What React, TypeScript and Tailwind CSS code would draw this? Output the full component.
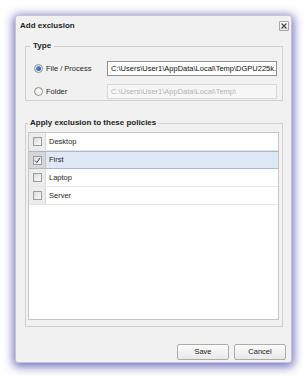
const policies = [
  { name: "Desktop", checked: false },
  { name: "First", checked: true },
  { name: "Laptop", checked: false },
  { name: "Server", checked: false },
]

function Radio({ on }: { on: boolean }) {
  return (
    <span className="w-[9px] h-[9px] rounded-full border border-[#8e8f8f] bg-gradient-to-br from-[#e6e6e6] to-white flex items-center justify-center shrink-0">
      {on && <span className="w-[5px] h-[5px] rounded-full bg-gradient-to-br from-[#6aa0e8] to-[#1b4fa8]" />}
    </span>
  )
}

function Check({ on }: { on: boolean }) {
  return (
    <span className="w-[9px] h-[9px] border border-[#9c9c9c] bg-gradient-to-br from-[#dcdcdc] to-[#fbfbfb] flex items-center justify-center">
      {on && (
        <svg width="7" height="7" viewBox="0 0 7 7">
          <path d="M1 3.6 L2.8 5.6 L6 1" fill="none" stroke="#2b3f8c" strokeWidth="1" />
        </svg>
      )}
    </span>
  )
}

export default function App() {
  return (
    <div className="w-[306px] h-[376px] bg-white pt-[15px] pl-[15px] font-['Liberation_Sans',Arial,sans-serif] text-[#1e1e1e]">
      <div className="w-[277px] h-[348px] bg-[#f1f1f1] rounded-[3px] border border-[#c4c4d6] shadow-[0_2px_10px_2px_rgba(60,60,165,0.7)] flex flex-col">
        {/* title */}
        <div className="h-[19px] flex items-center justify-between pl-[4px] pr-[2px]">
          <span className="text-[8px] font-bold leading-none">Add exclusion</span>
          <span className="w-[10px] h-[10px] border border-[#a5a5a5] rounded-[1px] bg-gradient-to-b from-white to-[#e6e6e6] flex items-center justify-center">
            <svg width="6" height="6" viewBox="0 0 6 6">
              <path d="M0.5 0.5 L5.5 5.5 M5.5 0.5 L0.5 5.5" stroke="#404040" strokeWidth="1.1" />
            </svg>
          </span>
        </div>

        {/* type group */}
        <fieldset className="mt-[6px] ml-[9px] w-[258px] border border-[#d0d0d0]">
          <legend className="ml-[4px] px-[3px] text-[8px] font-bold leading-[10px]">Type</legend>
          <div className="pl-[8px] pr-[5px] pb-[1px]">
            <div className="mt-[10px] flex items-center h-[15px]">
              <div className="w-[73px] flex items-center gap-[3px]">
                <Radio on={true} />
                <span className="text-[7.5px]">File / Process</span>
              </div>
              <div className="flex-1 h-[15px] border border-[#8f8f8f] bg-white pl-[3px] flex items-center overflow-hidden whitespace-nowrap text-[7.5px] text-[#111]">
                C:\Users\User1\AppData\Local\Temp\DGPU225k.
              </div>
            </div>
            <div className="mt-[8px] flex items-center h-[15px]">
              <div className="w-[73px] flex items-center gap-[3px]">
                <Radio on={false} />
                <span className="text-[7.5px]">Folder</span>
              </div>
              <div className="flex-1 h-[15px] border border-[#d9d9d9] bg-[#f6f6f6] pl-[3px] flex items-center overflow-hidden whitespace-nowrap text-[7.5px] text-[#b4b4b4]">
                C:\Users\User1\AppData\Local\Temp\
              </div>
            </div>
          </div>
        </fieldset>

        {/* policies group */}
        <fieldset className="mt-[17px] ml-[9px] w-[258px] border border-[#d0d0d0]">
          <legend className="ml-[2px] px-[2px] text-[8px] font-bold leading-[10px]">Apply exclusion to these policies</legend>
          <div className="pl-[2px] pr-[3px] pb-[6px]">
            <div className="mt-[4px] h-[188px] border border-[#c6c6c6] bg-white">
              {policies.map((p) => (
                <div
                  key={p.name}
                  className={
                    p.checked
                      ? "h-[18px] flex border-y border-[#aab6cb] bg-[#dfe8f6]"
                      : "h-[18px] flex border-b border-[#e6e6e6]"
                  }
                >
                  <div
                    className={
                      p.checked
                        ? "w-[17px] flex items-center justify-center bg-[#d6d6d6] border-r border-[#c4c4c4]"
                        : "w-[17px] flex items-center justify-center bg-[#ececec] border-r border-[#dadada]"
                    }
                  >
                    <Check on={p.checked} />
                  </div>
                  <span className="pl-[3px] flex items-center text-[7.5px] text-[#1e1e1e]">{p.name}</span>
                </div>
              ))}
            </div>
          </div>
        </fieldset>

        {/* buttons */}
        <div className="mt-auto mb-[2px] flex justify-end gap-[5px] pr-[5px]">
          <button className="w-[52px] h-[16px] rounded-[2px] border border-[#adadad] bg-gradient-to-b from-[#fbfbfb] to-[#e9e9e9] text-[7.5px] text-[#222]">
            Save
          </button>
          <button className="w-[52px] h-[16px] rounded-[2px] border border-[#adadad] bg-gradient-to-b from-[#fbfbfb] to-[#e9e9e9] text-[7.5px] text-[#222]">
            Cancel
          </button>
        </div>
      </div>
    </div>
  )
}
